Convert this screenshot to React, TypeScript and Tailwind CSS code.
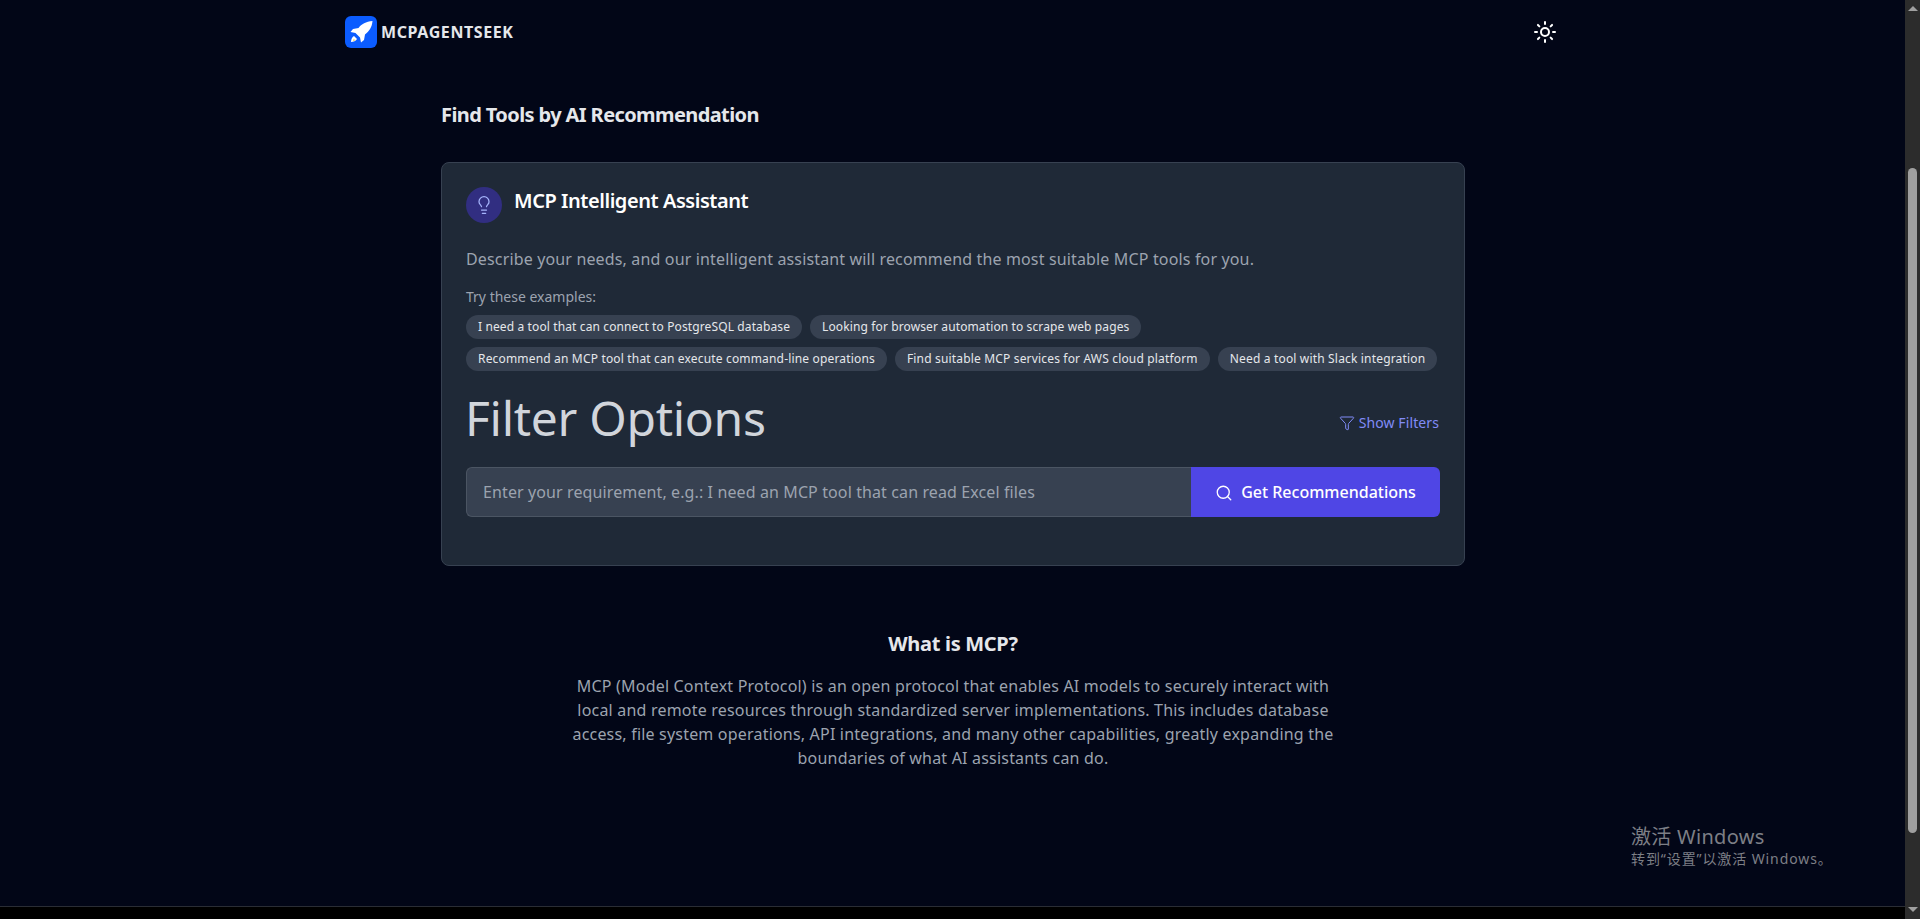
import { Filter, Lightbulb, Search, Sun } from "lucide-react";

const row1 = ["I need a tool that can connect to PostgreSQL database", "Looking for browser automation to scrape web pages"];
const row2 = [
  "Recommend an MCP tool that can execute command-line operations",
  "Find suitable MCP services for AWS cloud platform",
  "Need a tool with Slack integration",
];

function Chip({ text, tracking }: { text: string; tracking: string }) {
  return <span className={`h-6 px-3 flex items-center rounded-full bg-[#374151] text-[#e5e7eb] text-xs whitespace-nowrap ${tracking}`}>{text}</span>;
}

function Logo() {
  return (
    <div className="w-8 h-8 rounded-md bg-[#0b5cff] flex items-center justify-center">
      <svg viewBox="0 0 32 32" className="w-8 h-8">
        <path d="M27.5 5 C21 5.5 16.5 8 13.5 12 L8 13 L5.5 16 L10.5 17 L15 21.5 L16 26.5 L19 24 L20 18.5 C24 15.5 27 11.5 27.5 5 Z" fill="#fff" />
        <path d="M9 20 C7 21 6 23.5 6 26 C8.5 26 11 25 12 23 Z" fill="#fff" />
        <path d="M8.5 23 C8 24 8 25 8 25 C9 25 10 24.5 10.5 24" fill="#f5d76e" />
      </svg>
    </div>
  );
}

export default function App() {
  return (
    <div className="h-[919px] overflow-hidden bg-black flex font-['Noto_Sans','Noto_Sans_CJK_SC',sans-serif]">
      <div className="flex-1 flex flex-col">
        <div className="h-[907px] bg-[#020617] border-b border-[#2a2d35] flex flex-col">
          <header className="h-[64px] flex items-center justify-between pl-[345px] pr-[348px] shrink-0">
            <div className="flex items-center gap-1">
              <Logo />
              <span className="text-[#e5e7eb] text-base font-bold tracking-[0.6px]">MCPAGENTSEEK</span>
            </div>
            <Sun className="w-6 h-6 text-white" strokeWidth={2} />
          </header>
          <main className="w-[1024px] ml-[441px]">
            <h1 className="mt-[37px] text-xl leading-7 font-bold tracking-[-0.6px] text-[#e5e7eb]">Find Tools by AI Recommendation</h1>
            <section className="mt-[33px] h-[404px] rounded-lg border border-[#374151] bg-[#1f2937] p-6">
              <div className="flex gap-3">
                <div className="w-9 h-9 rounded-full bg-[#312e81] flex items-center justify-center">
                  <Lightbulb className="w-5 h-5 text-[#a5b4fc]" strokeWidth={1.5} />
                </div>
                <h2 className="text-xl leading-7 font-semibold tracking-[-0.45px] text-white">MCP Intelligent Assistant</h2>
              </div>
              <p className="mt-[24px] text-base leading-6 tracking-[0.15px] text-[#9ca3af]">Describe your needs, and our intelligent assistant will recommend the most suitable MCP tools for you.</p>
              <p className="mt-[16px] text-sm leading-5 text-[#9ca3af]">Try these examples:</p>
              <div className="mt-[8px] flex gap-2">{row1.map((t) => <Chip key={t} text={t} tracking="tracking-[0.12px]" />)}</div>
              <div className="mt-2 flex gap-2">{row2.map((t) => <Chip key={t} text={t} tracking="tracking-[0.17px]" />)}</div>
              <div className="mt-[17px] flex items-center justify-between">
                <h2 className="-ml-px text-5xl leading-[60px] tracking-[-0.3px] text-[#d1d5db]">Filter Options</h2>
                <div className="mt-[10px] mr-px flex items-center gap-1 text-sm tracking-[0.1px] text-[#818cf8]">
                  <Filter className="w-4 h-4" strokeWidth={1.5} />
                  Show Filters
                </div>
              </div>
              <div className="mt-[19px] h-[50px] flex">
                <div className="flex-1 flex items-center px-4 rounded-l-md border border-[#4b5563] border-r-0 bg-[#374151] text-base tracking-[0.11px] text-[#9ca3af]">Enter your requirement, e.g.: I need an MCP tool that can read Excel files</div>
                <button className="w-[249px] flex items-center justify-center gap-2 rounded-r-md bg-[#4f46e5] text-white text-base font-medium">
                  <Search className="w-[18px] h-[18px] mt-px" strokeWidth={1.75} />
                  Get Recommendations
                </button>
              </div>
            </section>
            <div className="mt-[64px] text-center">
              <h3 className="text-xl leading-7 font-bold tracking-[-0.3px] text-[#e5e7eb]">What is MCP?</h3>
              <p className="mt-4 w-[768px] mx-auto text-base leading-6 tracking-[0.195px] text-[#9ca3af]">MCP (Model Context Protocol) is an open protocol that enables AI models to securely interact with local and remote resources through standardized server implementations. This includes database access, file system operations, API integrations, and many other capabilities, greatly expanding the boundaries of what AI assistants can do.</p>
            </div>
          </main>
          <div className="mt-auto mb-[37px] ml-[1631px] text-[#7d7f86]">
            <div className="text-xl leading-6 tracking-[0.3px]">激活 Windows</div>
            <div className="text-sm leading-5 tracking-[0.9px]">转到“设置”以激活 Windows。</div>
          </div>
        </div>
      </div>
      <aside className="w-[15px] bg-[#2c2c2c] flex flex-col items-center">
        <div className="h-[17px] flex items-center"><div className="w-0 h-0 border-x-[5px] border-x-transparent border-b-[5px] border-b-[#a0a0a0]" /></div>
        <div className="mt-[151px] h-[665px] w-[9px] rounded-full bg-[#9f9f9f]" />
        <div className="mt-auto h-[17px] flex items-center pb-[3px]"><div className="w-0 h-0 border-x-[5px] border-x-transparent border-t-[5px] border-t-[#a0a0a0]" /></div>
      </aside>
    </div>
  );
}
